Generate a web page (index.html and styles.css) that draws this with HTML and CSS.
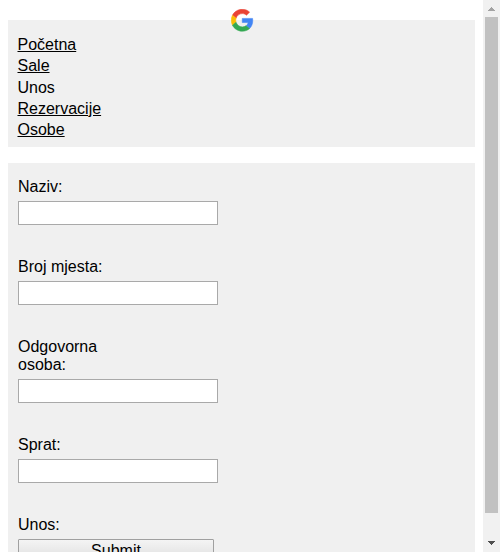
FILE: index.html
```html
<!DOCTYPE html>
<html lang="bs">
<head>
<meta charset="utf-8">
<title>Unos</title>
<link rel="stylesheet" href="styles.css">
</head>
<body>
<div class="window">
  <main class="page">
    <nav class="menu">
      <svg class="logo" viewBox="-0.6 -0.6 49.2 49.2" stroke-width="1.2" aria-hidden="true">
        <path fill="#EA4335" stroke="#EA4335" d="M24 9.5c3.54 0 6.71 1.22 9.21 3.6l6.85-6.85C35.9 2.38 30.47 0 24 0 14.62 0 6.51 5.38 2.56 13.22l7.98 6.19C12.43 13.72 17.74 9.5 24 9.5z"/>
        <path fill="#4285F4" stroke="#4285F4" d="M46.98 24.55c0-1.57-.15-3.09-.38-4.55H24v9.02h12.94c-.58 2.96-2.26 5.48-4.78 7.18l7.73 6c4.51-4.18 7.09-10.36 7.09-17.65z"/>
        <path fill="#FBBC05" stroke="#FBBC05" d="M10.53 28.59c-.48-1.45-.76-2.99-.76-4.59s.27-3.14.76-4.59l-7.98-6.19C.92 16.46 0 20.12 0 24c0 3.88.92 7.54 2.56 10.78l7.97-6.19z"/>
        <path fill="#34A853" stroke="#34A853" d="M24 48c6.48 0 11.93-2.13 15.89-5.81l-7.73-6c-2.15 1.45-4.92 2.3-8.16 2.3-6.26 0-11.57-4.22-13.47-9.91l-7.98 6.19C6.51 42.62 14.62 48 24 48z"/>
      </svg>
      <ul class="links">
        <li><a href="#">Početna</a></li>
        <li><a href="#">Sale</a></li>
        <li>Unos</li>
        <li><a href="#">Rezervacije</a></li>
        <li><a href="#">Osobe</a></li>
      </ul>
    </nav>
    <form class="form">
      <div class="field"><label for="naziv">Naziv:</label><input id="naziv" type="text"></div>
      <div class="field"><label for="mjesta">Broj mjesta:</label><input id="mjesta" type="text"></div>
      <div class="field"><label for="osoba">Odgovorna osoba:</label><input id="osoba" type="text"></div>
      <div class="field"><label for="sprat">Sprat:</label><input id="sprat" type="text"></div>
      <div class="field"><label for="unos">Unos:</label><button id="unos" type="button">Submit</button></div>
    </form>
  </main>
  <div class="scrollbar">
    <svg class="arrow" viewBox="0 0 17 17" shape-rendering="crispEdges"><path fill="#a3a3a3" d="M8 7h1v1h1v1h1v1h1v1H5v-1h1V9h1V8h1z"/></svg>
    <div class="thumb"></div>
    <svg class="arrow" viewBox="0 0 17 17" shape-rendering="crispEdges"><path fill="#505050" d="M5 6h7v1h-1v1h-1v1H9v1H8V9H7V8H6V7H5z"/></svg>
  </div>
</div>
</body>
</html>
```
FILE: styles.css
```css
* { box-sizing: border-box; }

body {
  margin: 0;
  background: #fff;
  color: #000;
  font: 16px/18px "Liberation Sans", Arial, sans-serif;
}

.window {
  display: flex;
  height: 552px;
  overflow: hidden;
}

.page {
  flex: 1;
  height: 552px;
  padding: 20px 8px 0;
  overflow: hidden;
}

.menu {
  position: relative;
  height: 127px;
  margin-bottom: 16px;
  padding: 14px 9.5px 0;
  background: #f0f0f0;
}

.logo {
  position: absolute;
  top: -11px;
  left: 223px;
  width: 22.5px;
  height: 22.5px;
}

.links {
  margin: 0;
  padding: 0;
  list-style: none;
  line-height: 21.25px;
}

.links a { color: #000; }

.form {
  height: 440px;
  padding: 15px 10px 0;
  background: #f0f0f0;
}

.field {
  display: flex;
  flex-direction: column;
  align-items: flex-start;
  margin-bottom: 33px;
}

.field label {
  width: 100px;
  margin-bottom: 5px;
}

.field input {
  width: 200px;
  height: 24px;
  padding: 1px;
  border: 1px solid #a9a9a9;
  background: #fff;
}

.field button {
  width: 196px;
  height: 24px;
  padding: 0;
  border: 1px solid #a0a0a0;
  border-radius: 1px;
  background: linear-gradient(#f4f4f4, #dddddd);
  color: #000;
  font: inherit;
}

.scrollbar {
  display: flex;
  flex-direction: column;
  width: 17px;
  background: #f1f1f1;
}

.arrow {
  display: block;
  width: 17px;
  height: 17px;
}

.arrow:last-child { margin-top: auto; }

.thumb {
  height: 496px;
  margin: 0 2px;
  background: #c1c1c1;
}
```
